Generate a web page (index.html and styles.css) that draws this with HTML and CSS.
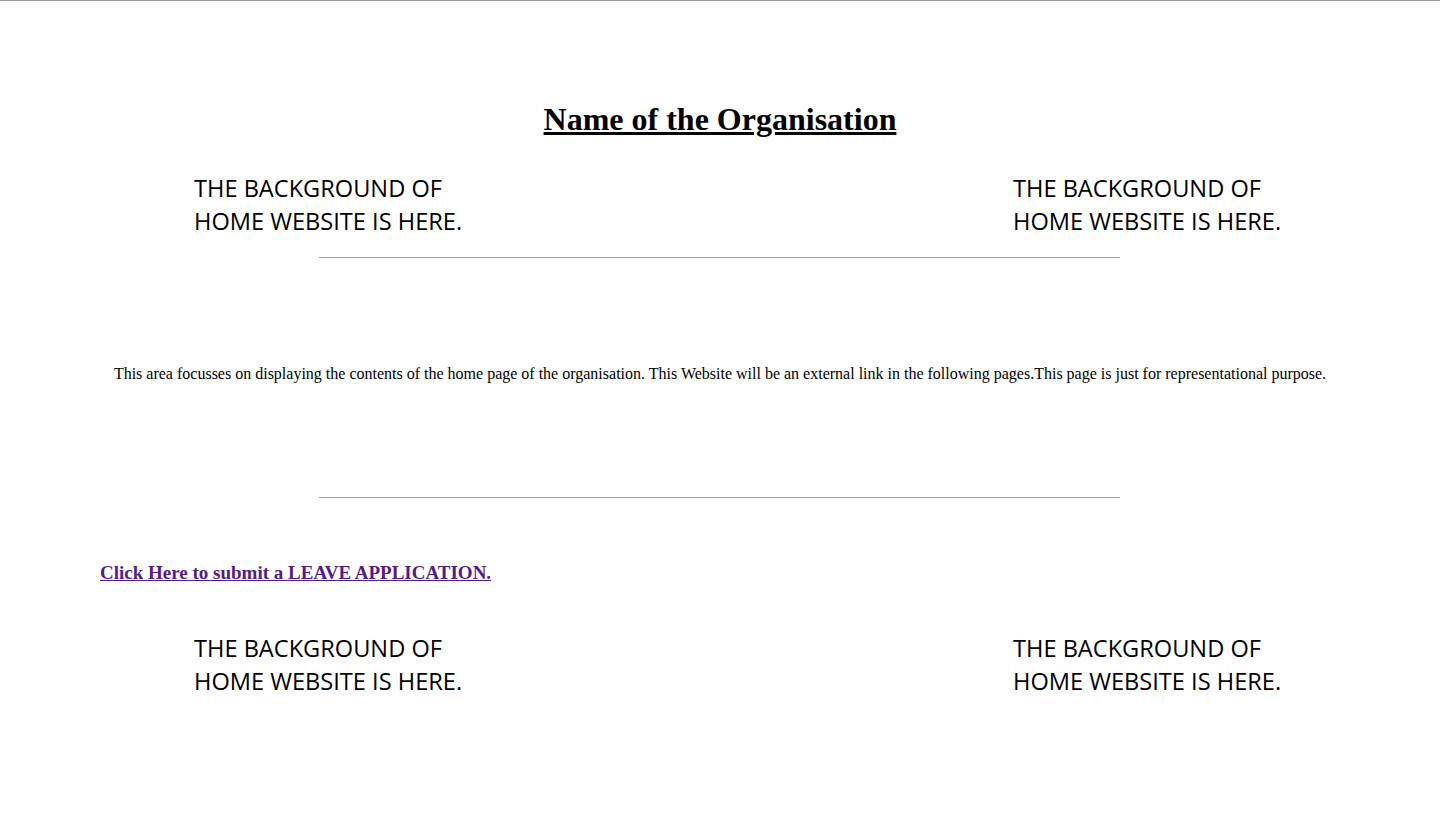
FILE: index.html
```html
<!DOCTYPE html>
<html>
<head>
<meta charset="utf-8">
<title>Home</title>
<link rel="stylesheet" href="styles.css">
</head>
<body>
<div class="topline"></div>
<h1 class="title">Name of the Organisation</h1>
<div class="bgrow top">
  <div class="bgtext">THE BACKGROUND OF<br>HOME WEBSITE IS HERE.</div>
  <div class="bgtext">THE BACKGROUND OF<br>HOME WEBSITE IS HERE.</div>
</div>
<hr class="rule first">
<p class="intro">This area focusses on displaying the contents of the home page of the organisation. This Website will be an external link in the following pages.This page is just for representational purpose.</p>
<hr class="rule">
<h3 class="leave"><a href="#" class="leave-link">Click Here to submit a LEAVE APPLICATION.</a></h3>
<div class="bgrow bottom">
  <div class="bgtext">THE BACKGROUND OF<br>HOME WEBSITE IS HERE.</div>
  <div class="bgtext">THE BACKGROUND OF<br>HOME WEBSITE IS HERE.</div>
</div>
</body>
</html>
```

FILE: styles.css
```css
html, body {
  margin: 0;
  padding: 0;
  background: #fff;
}
body {
  font-family: "Liberation Serif", "Times New Roman", serif;
  color: #000;
}
.topline {
  height: 1px;
  background: #999;
}
.title {
  margin: 0;
  padding-top: 100px;
  text-align: center;
  font-size: 32px;
  line-height: 37px;
  font-weight: bold;
  text-decoration: underline;
}
.bgrow {
  display: flex;
  justify-content: space-between;
  padding: 0 137px 0 194px;
}
.bgrow.top {
  margin-top: 34px;
}
.bgtext {
  font-family: "Open Sans", "Noto Sans", sans-serif;
  font-size: 23.6px;
  line-height: 33px;
  width: 290px;
}
.rule {
  width: 801px;
  margin: 114px 0 0 319px;
  border: 0;
  border-top: 1px solid #a0a0a0;
  height: 0;
}
.rule.first {
  margin-top: 19px;
}
.intro {
  margin: 106px 0 0;
  text-align: center;
  font-size: 16px;
  line-height: 19px;
}
.leave {
  margin: 64px 0 0 100px;
  font-size: 19px;
  line-height: 22px;
}
.leave-link {
  color: #551a8b;
}
.bgrow.bottom {
  margin-top: 48px;
}
```
